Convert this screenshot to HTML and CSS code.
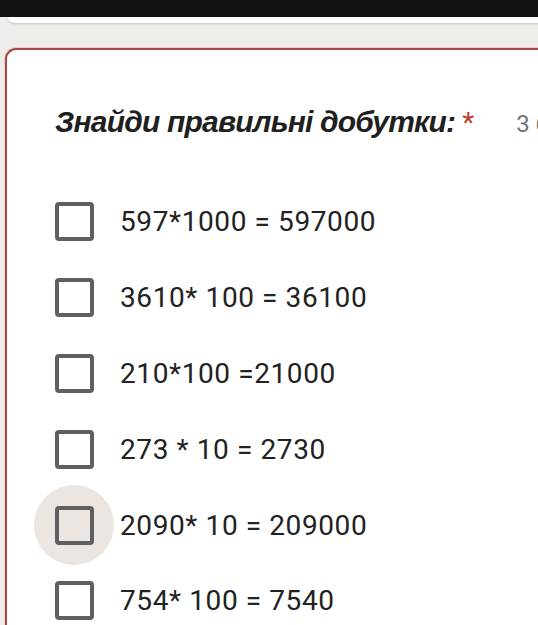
FILE: index.html
```html
<!DOCTYPE html>
<html lang="uk">
<head>
<meta charset="utf-8">
<link rel="stylesheet" href="styles.css">
</head>
<body>
<div class="topbar"></div>
<div class="prev-card"></div>
<div class="card">
  <div class="title-row">
    <span class="title">Знайди правильні добутки:</span>
    <span class="req">*</span>
    <span class="points">3 бали</span>
  </div>
  <div class="options">
    <div class="option"><span class="box-wrap"><span class="box"></span></span><span class="label">597*1000 = 597000</span></div>
    <div class="option"><span class="box-wrap"><span class="box"></span></span><span class="label">3610* 100 = 36100</span></div>
    <div class="option"><span class="box-wrap"><span class="box"></span></span><span class="label">210*100 =21000</span></div>
    <div class="option"><span class="box-wrap"><span class="box"></span></span><span class="label">273 * 10 = 2730</span></div>
    <div class="option"><span class="box-wrap hover"><span class="box"></span></span><span class="label">2090* 10 = 209000</span></div>
    <div class="option"><span class="box-wrap"><span class="box"></span></span><span class="label">754* 100 = 7540</span></div>
  </div>
</div>
</body>
</html>
```
FILE: styles.css
```css
html, body {
  margin: 0;
  padding: 0;
  background: #efede9;
  overflow: hidden;
  width: 538px;
  height: 625px;
}
body {
  font-family: Roboto, "Liberation Sans", Arial, sans-serif;
  color: #202124;
}
.topbar {
  height: 17px;
  background: #111111;
}
.prev-card {
  height: 6px;
  margin-left: 8px;
  margin-right: -20px;
  background: #ffffff;
  border-radius: 0 0 0 10px;
  box-shadow: 0 1px 2px rgba(0,0,0,0.18);
}
.card {
  margin-top: 25px;
  margin-left: 5px;
  margin-right: -40px;
  background: #ffffff;
  border: 2px solid #a04b47;
  border-radius: 11px;
  box-shadow: 0 0 0 1px rgba(230,160,160,0.35);
  padding: 55px 0 40px 0;
}
.title-row {
  display: flex;
  align-items: baseline;
  padding-left: 48px;
  white-space: nowrap;
  height: 36px;
}
.title {
  font-family: "Liberation Sans", Arial, sans-serif;
  font-weight: 700;
  font-style: italic;
  font-size: 30px;
  letter-spacing: -0.8px;
  color: #1f1f1f;
}
.req {
  color: #c5392c;
  font-size: 28px;
  margin-left: 7px;
}
.points {
  color: #70757a;
  font-size: 24px;
  margin-left: 42px;
}
.options {
  display: flex;
  flex-direction: column;
  margin-top: 43px;
  padding-left: 27px;
}
.option {
  display: flex;
  align-items: center;
  height: 75.8px;
}
.box-wrap {
  width: 80px;
  height: 80px;
  border-radius: 50%;
  display: flex;
  align-items: center;
  justify-content: center;
  flex: none;
}
.box-wrap.hover {
  background: #ebe6e2;
}
.box {
  width: 31px;
  height: 31px;
  border: 4px solid #5f5f5f;
  border-radius: 4px;
}
.label {
  font-size: 28px;
  letter-spacing: 0.6px;
  margin-left: 6px;
  color: #222222;
}
```
